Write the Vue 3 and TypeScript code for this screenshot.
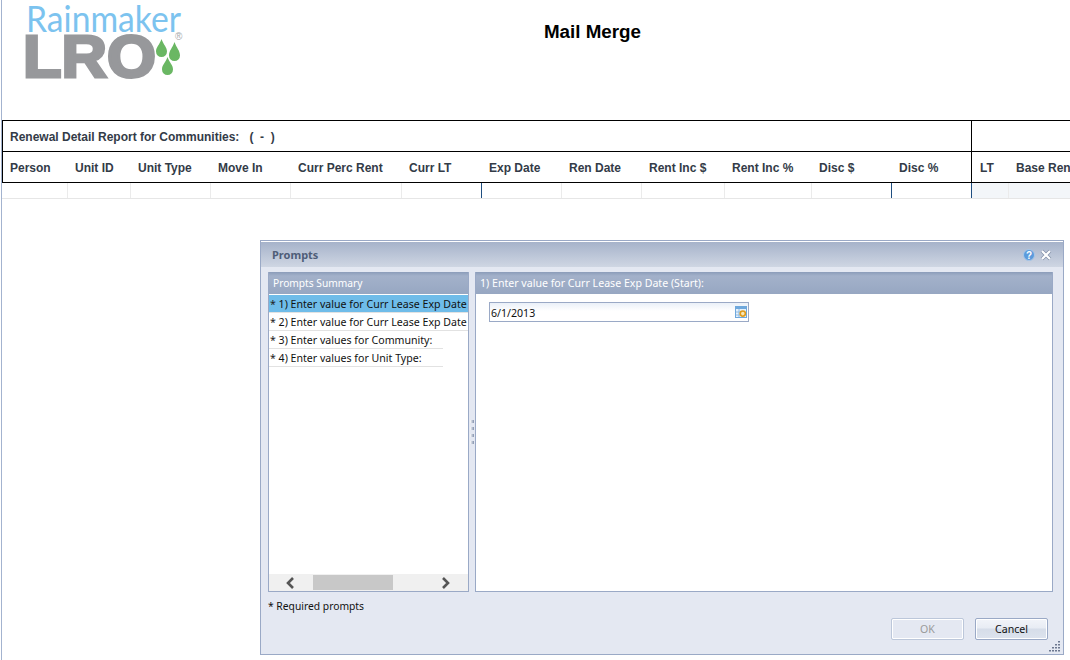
<script setup lang="ts">
interface Col { label: string; width: number; edge?: boolean; tint?: boolean }

const columns: Col[] = [
  { label: 'Person', width: 64 },
  { label: 'Unit ID', width: 63 },
  { label: 'Unit Type', width: 80 },
  { label: 'Move In', width: 80 },
  { label: 'Curr Perc Rent', width: 111 },
  { label: 'Curr LT', width: 80, edge: true },
  { label: 'Exp Date', width: 80 },
  { label: 'Ren Date', width: 80 },
  { label: 'Rent Inc $', width: 83 },
  { label: 'Rent Inc %', width: 87 },
  { label: 'Disc $', width: 80, edge: true },
  { label: 'Disc %', width: 80, edge: true },
  { label: 'LT', width: 37, tint: true },
  { label: 'Base Rent', width: 90, tint: true }
]

const prompts = [
  { text: '1) Enter value for Curr Lease Exp Date (Start):', selected: true, short: false },
  { text: '2) Enter value for Curr Lease Exp Date (End):', selected: false, short: false },
  { text: '3) Enter values for Community:', selected: false, short: true },
  { text: '4) Enter values for Unit Type:', selected: false, short: true }
]

const gripDots = [
  [9, 1], [6, 4], [9, 4], [3, 7], [6, 7], [9, 7], [0, 10], [3, 10], [6, 10], [9, 10]
]
</script>

<template>
  <div class="page">
    <header class="top">
      <svg class="logo" width="170" height="82" viewBox="0 0 170 82">
        <text class="logo-rain" x="2" y="32" textLength="155" lengthAdjust="spacingAndGlyphs">Rainmaker</text>
        <text class="logo-lro" x="-1" y="76.500" textLength="133" lengthAdjust="spacingAndGlyphs">LRO</text>
        <text class="logo-reg" x="151" y="40">®</text>
        <path class="drop" d="M137.500 39c2 6 5.500 8 5.500 12.500a5.500 5.500 0 0 1-11 0c0-4.500 3.500-6.500 5.500-12.500z" />
        <path class="drop" d="M150.500 42c2 6 5.500 8.500 5.500 13.500a5.500 5.500 0 0 1-11 0c0-5 3.500-7.500 5.500-13.500z" />
        <path class="drop" d="M143.500 57c2 6 5.500 7.500 5.500 12.500a5.500 5.500 0 0 1-11 0c0-5 3.500-6.500 5.500-12.500z" />
      </svg>
      <h1 class="title">Mail Merge</h1>
    </header>

    <section class="report">
      <div class="group-row">
        <div class="group-main">
          <span>Renewal Detail Report for Communities:</span>
          <span class="range">( &nbsp;-&nbsp; )</span>
        </div>
        <div class="group-side"></div>
      </div>
      <div class="head-row">
        <div
          v-for="col in columns"
          :key="col.label"
          class="head-cell"
          :class="{ 'side-start': col.label === 'LT' }"
          :style="{ width: col.width + 'px' }"
        >{{ col.label }}</div>
      </div>
      <div class="data-row">
        <div
          v-for="col in columns"
          :key="col.label"
          class="data-cell"
          :class="{ edge: col.edge, tint: col.tint }"
          :style="{ width: col.width + 'px' }"
        ></div>
      </div>
    </section>

    <div class="dialog">
      <div class="dialog-head">
        <span class="dialog-title">Prompts</span>
        <div class="dialog-icons">
          <svg width="12" height="12" viewBox="0 0 12 12">
            <circle cx="6" cy="6" r="5.500" fill="#5b9bdc" stroke="#a9c6e6" />
            <text x="6" y="9.500" class="help-q">?</text>
          </svg>
          <svg width="12" height="12" viewBox="0 0 12 12">
            <path d="M2 2l8 8M10 2l-8 8" stroke="#8390a8" stroke-width="3.600" />
            <path d="M2 2l8 8M10 2l-8 8" stroke="#fff" stroke-width="2.200" />
          </svg>
        </div>
      </div>

      <div class="dialog-body">
        <div class="summary">
          <div class="panel-head">Prompts Summary</div>
          <ul class="prompt-list">
            <li
              v-for="p in prompts"
              :key="p.text"
              :class="{ selected: p.selected, short: p.short }"
            ><span class="star">*</span> {{ p.text }}</li>
          </ul>
          <div class="scrollbar">
            <svg class="chev" width="10" height="12" viewBox="0 0 10 12">
              <path d="M8 1L3 6l5 5" fill="none" stroke="#555" stroke-width="2.600" />
            </svg>
            <div class="thumb"></div>
            <svg class="chev" width="10" height="12" viewBox="0 0 10 12">
              <path d="M2 1l5 5-5 5" fill="none" stroke="#555" stroke-width="2.600" />
            </svg>
          </div>
        </div>

        <div class="splitter">
          <i v-for="n in 4" :key="n"></i>
        </div>

        <div class="editor">
          <div class="panel-head">1) Enter value for Curr Lease Exp Date (Start):</div>
          <div class="editor-body">
            <div class="date-input">
              <span>6/1/2013</span>
              <svg width="12" height="12" viewBox="0 0 12 12">
                <rect x="0.500" y="0.500" width="11" height="11" fill="#e6f1fb" stroke="#6fa8dc" />
                <rect x="1" y="1" width="10" height="2" fill="#6fa8dc" />
                <path d="M4 3v8M1 6h6M1 9h4" stroke="#8dbce6" />
                <circle cx="7.800" cy="7.600" r="2.600" fill="#f6e7b8" stroke="#e09a1a" stroke-width="1.600" />
              </svg>
            </div>
          </div>
        </div>
      </div>

      <div class="required"><span class="star">*</span> Required prompts</div>

      <div class="dialog-foot">
        <button class="btn" disabled>OK</button>
        <button class="btn">Cancel</button>
      </div>

      <svg class="grip" width="12" height="12" viewBox="0 0 12 12">
        <rect v-for="d in gripDots" :key="d.join()" :x="d[0]" :y="d[1]" width="2" height="1.500" fill="#6d7890" />
      </svg>
    </div>
  </div>
</template>

<style>
html, body {
  margin: 0;
  background: #fff;
  overflow: hidden;
}
</style>

<style scoped>
.page {
  position: relative;
  width: 1069px;
  height: 660px;
  margin-left: 1px;
  border-left: 1px solid #a3b3cf;
  box-sizing: border-box;
  overflow: hidden;
  font-family: "Liberation Sans", Arial, sans-serif;
}
.top {
  display: flex;
  height: 120px;
}
.logo {
  margin-left: 22px;
  width: 170px;
  height: 82px;
  overflow: visible;
}
.logo-rain {
  font-family: "Lato", "Open Sans", sans-serif;
  font-weight: 400;
  font-size: 36px;
  fill: #7cc3ef;
}
.logo-lro {
  font-family: "Liberation Sans", Arial, sans-serif;
  font-weight: 700;
  font-size: 59px;
  fill: #97989b;
  stroke: #97989b;
  stroke-width: 3px;
}
.logo-reg {
  font-family: "Liberation Sans", Arial, sans-serif;
  font-size: 10px;
  fill: #a9abae;
}
.drop {
  fill: #6ab763;
}
.title {
  flex: 1;
  margin: 21px 0 0 24px;
  padding-right: 103px;
  text-align: center;
  font-size: 18.8px;
  line-height: 21px;
  font-weight: 700;
  color: #000;
}
.report {
  color: #333b47;
  font-size: 12px;
  font-weight: 700;
}
.group-row {
  display: flex;
  height: 30px;
  border-top: 1px solid #000;
  border-bottom: 1px solid #000;
}
.group-main {
  width: 970px;
  box-sizing: border-box;
  flex: none;
  display: flex;
  gap: 10px;
  align-items: center;
  padding: 2px 0 0 7px;
  border-left: 1px solid #000;
  border-right: 1px solid #000;
}
.range {
  white-space: pre;
}
.group-side {
  flex: 1;
}
.head-row {
  display: flex;
  height: 30px;
  border-bottom: 1px solid #000;
  border-left: 1px solid #000;
}
.head-cell {
  flex: none;
  box-sizing: border-box;
  padding-left: 8px;
  line-height: 32px;
  white-space: nowrap;
}
.head-cell:first-child {
  padding-left: 7px;
}
.side-start {
  border-left: 1px solid #000;
}
.data-row {
  display: flex;
  height: 15px;
  border-bottom: 1px solid #e6e6e6;
  padding-left: 2px;
}
.data-cell {
  flex: none;
  box-sizing: border-box;
  border-right: 1px solid #ebebeb;
}
.data-cell.edge {
  border-right-color: #1f4e80;
}
.data-cell.tint {
  background: #f3f6f9;
}
.dialog {
  position: absolute;
  left: 258px;
  top: 240px;
  width: 804px;
  height: 415px;
  box-sizing: border-box;
  display: flex;
  flex-direction: column;
  border: 1px solid #9aa9c6;
  background: #e4e8f2;
  font-family: "Noto Sans", "DejaVu Sans", sans-serif;
  font-size: 10.6px;
  color: #111;
}
.dialog-head {
  flex: none;
  height: 26px;
  box-sizing: border-box;
  display: flex;
  align-items: center;
  justify-content: space-between;
  padding: 0 11px;
  background: linear-gradient(#a6b3ca, #cfd6e3);
  border-top: 1px solid #fff;
}
.dialog-title {
  font-weight: 700;
  font-size: 11px;
  color: #4f5d78;
}
.dialog-icons {
  display: flex;
  gap: 5px;
  align-items: center;
}
.help-q {
  font-family: "Liberation Sans", Arial, sans-serif;
  font-size: 10px;
  font-weight: 700;
  text-anchor: middle;
  fill: #fff;
}
.dialog-body {
  flex: none;
  display: flex;
  height: 320px;
  margin: 5px 10px 0 7px;
}
.summary {
  flex: none;
  width: 201px;
  box-sizing: border-box;
  display: flex;
  flex-direction: column;
  background: #fff;
  border: 1px solid #9aa9c6;
  border-top: none;
}
.editor {
  flex: 1;
  display: flex;
  flex-direction: column;
  background: #fff;
  border: 1px solid #9aa9c6;
  border-top: none;
}
.panel-head {
  flex: none;
  height: 22px;
  box-sizing: border-box;
  padding-left: 4px;
  line-height: 22px;
  color: #fff;
  background: linear-gradient(#8b9cb9 0, #a3b1ca 4px, #97a7c2 100%);
  white-space: nowrap;
  overflow: hidden;
}
.summary .panel-head {
  font-size: 10.2px;
}
.prompt-list {
  flex: 1;
  margin: 1px 0 0;
  padding: 0;
  list-style: none;
  overflow: hidden;
}
.prompt-list li {
  height: 18px;
  box-sizing: border-box;
  line-height: 19px;
  white-space: nowrap;
  overflow: hidden;
  border-bottom: 1px solid #e2e2e2;
}
.prompt-list li.short {
  width: 174px;
}
.prompt-list li.selected {
  background: #6fbce9;
}
.star {
  color: #222;
  padding-left: 1px;
}
.scrollbar {
  flex: none;
  height: 17px;
  display: flex;
  align-items: center;
  background: #f0f0f0;
}
.chev {
  flex: none;
}
.chev:first-child {
  margin-left: 16px;
}
.chev:last-child {
  margin-left: 48px;
}
.thumb {
  flex: none;
  width: 80px;
  height: 15px;
  margin-left: 18px;
  background: #c8c8c8;
}
.splitter {
  flex: none;
  width: 6px;
  display: flex;
  flex-direction: column;
  align-items: center;
  justify-content: center;
  gap: 4px;
}
.splitter i {
  display: block;
  width: 4px;
  height: 3px;
  background: linear-gradient(90deg, #fff, #8492ad);
}
.editor-body {
  flex: 1;
  padding: 8px 13px;
}
.date-input {
  width: 260px;
  height: 20px;
  box-sizing: border-box;
  display: flex;
  align-items: center;
  justify-content: space-between;
  padding: 0 1px 0 1px;
  border: 1px solid #9aa9c6;
  background: linear-gradient(#eaf0f8, #fff 8px);
}
.date-input span {
  padding-top: 2px;
}
.required {
  flex: none;
  margin: 7px 0 0 7px;
  line-height: 14px;
  font-size: 10.3px;
}
.required .star {
  color: #111;
  padding-left: 0;
}
.dialog-foot {
  flex: none;
  display: flex;
  justify-content: flex-end;
  gap: 11px;
  margin: 5px 15px 0 0;
}
.btn {
  width: 73px;
  height: 22px;
  padding: 0;
  box-sizing: border-box;
  border: 1px solid #9aa9c6;
  border-radius: 2px;
  background: linear-gradient(#f2f4f9 0, #e8ecf4 45%, #d6dde9 50%, #dde3ee 100%);
  font: inherit;
  color: #111;
  box-shadow: inset 0 0 0 1px #fff;
}
.btn:disabled {
  color: #9a9a9a;
  border-color: #bcc7da;
  background: #e4e8f2;
}
.grip {
  position: absolute;
  right: 2px;
  bottom: 2px;
}
</style>
